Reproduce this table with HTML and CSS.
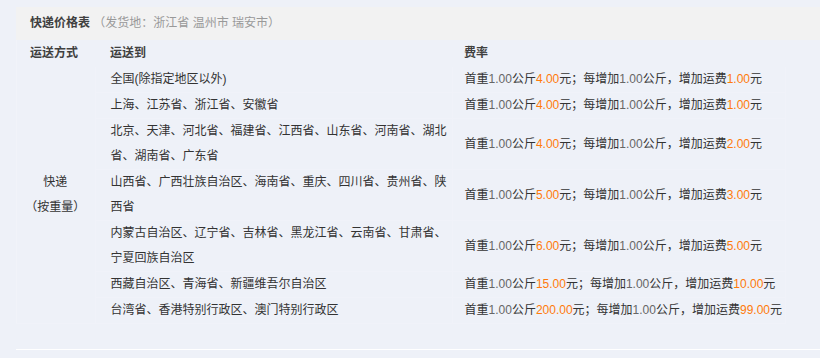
FILE: index.html
```html
<!DOCTYPE html>
<html lang="zh-CN">
<head>
<meta charset="utf-8">
<title>快递价格表</title>
<link rel="stylesheet" href="styles.css">
</head>
<body>
<div class="box">
  <div class="title"><b>快递价格表</b> <span class="origin">（发货地：浙江省 温州市 瑞安市）</span></div>
  <div class="body">
    <table class="price">
      <colgroup><col class="c1"><col class="c2"><col class="c3"></colgroup>
      <thead>
        <tr><th class="way">运送方式</th><th class="dest">运送到</th><th class="rate">费率</th></tr>
      </thead>
      <tbody>
        <tr>
          <td class="way" rowspan="7">快递<br>（按重量）</td>
          <td class="dest">全国(除指定地区以外)</td>
          <td class="rate">首重<span class="n">1.00</span>公斤<span class="o">4.00</span>元；每增加<span class="n">1.00</span>公斤，增加运费<span class="o">1.00</span>元</td>
        </tr>
        <tr>
          <td class="dest">上海、江苏省、浙江省、安徽省</td>
          <td class="rate">首重<span class="n">1.00</span>公斤<span class="o">4.00</span>元；每增加<span class="n">1.00</span>公斤，增加运费<span class="o">1.00</span>元</td>
        </tr>
        <tr>
          <td class="dest">北京、天津、河北省、福建省、江西省、山东省、河南省、湖北省、湖南省、广东省</td>
          <td class="rate">首重<span class="n">1.00</span>公斤<span class="o">4.00</span>元；每增加<span class="n">1.00</span>公斤，增加运费<span class="o">2.00</span>元</td>
        </tr>
        <tr>
          <td class="dest">山西省、广西壮族自治区、海南省、重庆、四川省、贵州省、陕西省</td>
          <td class="rate">首重<span class="n">1.00</span>公斤<span class="o">5.00</span>元；每增加<span class="n">1.00</span>公斤，增加运费<span class="o">3.00</span>元</td>
        </tr>
        <tr>
          <td class="dest">内蒙古自治区、辽宁省、吉林省、黑龙江省、云南省、甘肃省、宁夏回族自治区</td>
          <td class="rate">首重<span class="n">1.00</span>公斤<span class="o">6.00</span>元；每增加<span class="n">1.00</span>公斤，增加运费<span class="o">5.00</span>元</td>
        </tr>
        <tr>
          <td class="dest">西藏自治区、青海省、新疆维吾尔自治区</td>
          <td class="rate">首重<span class="n">1.00</span>公斤<span class="o">15.00</span>元；每增加<span class="n">1.00</span>公斤，增加运费<span class="o">10.00</span>元</td>
        </tr>
        <tr>
          <td class="dest">台湾省、香港特别行政区、澳门特别行政区</td>
          <td class="rate">首重<span class="n">1.00</span>公斤<span class="o">200.00</span>元；每增加<span class="n">1.00</span>公斤，增加运费<span class="o">99.00</span>元</td>
        </tr>
      </tbody>
    </table>
  </div>
</div>
</body>
</html>
```

FILE: styles.css
```css
html, body {
  margin: 0;
  padding: 0;
  background: #eef1f8;
}
body {
  font-family: "Liberation Sans", "Noto Sans CJK SC", sans-serif;
  font-size: 12px;
  color: #333;
}
.box {
  margin: 7px 0 0 16px;
  padding-bottom: 25px;
  border-bottom: 1px solid #ffffff;
}
.title {
  background: #f2f2f2;
  height: 33px;
  line-height: 33px;
  padding-left: 14px;
  color: #404040;
}
.title b {
  font-weight: bold;
}
.origin {
  color: #999;
}
.body {
  border-left: 1px solid #f1f3f9;
}
.price {
  width: 769px;
  table-layout: fixed;
  border-collapse: collapse;
  margin-left: -1px;
}
.c1 { width: 79px; }
.c2 { width: 357px; }
.c3 { width: 333px; }
.price th {
  height: 27px;
  line-height: 27px;
  padding: 0;
  font-weight: bold;
  color: #404040;
  text-align: left;
  vertical-align: middle;
}
.price th.way {
  padding-left: 14px;
}
.price td {
  line-height: 25px;
  padding: 0;
  border-bottom: 1px solid #f0f2f9;
  vertical-align: middle;
  text-align: left;
}
.price .dest {
  padding: 0 5px 0 15px;
}
.price .rate {
  padding: 0 0 0 12px;
}
.price td.rate {
  border-left: 1px solid #f0f2f9;
  border-right: 1px solid #f0f2f9;
}
.price td.way {
  text-align: center;
  border-right: 1px solid #f0f2f9;
  color: #333;
}
.n {
  color: #666;
}
.o {
  color: #ff7a0a;
}
```
